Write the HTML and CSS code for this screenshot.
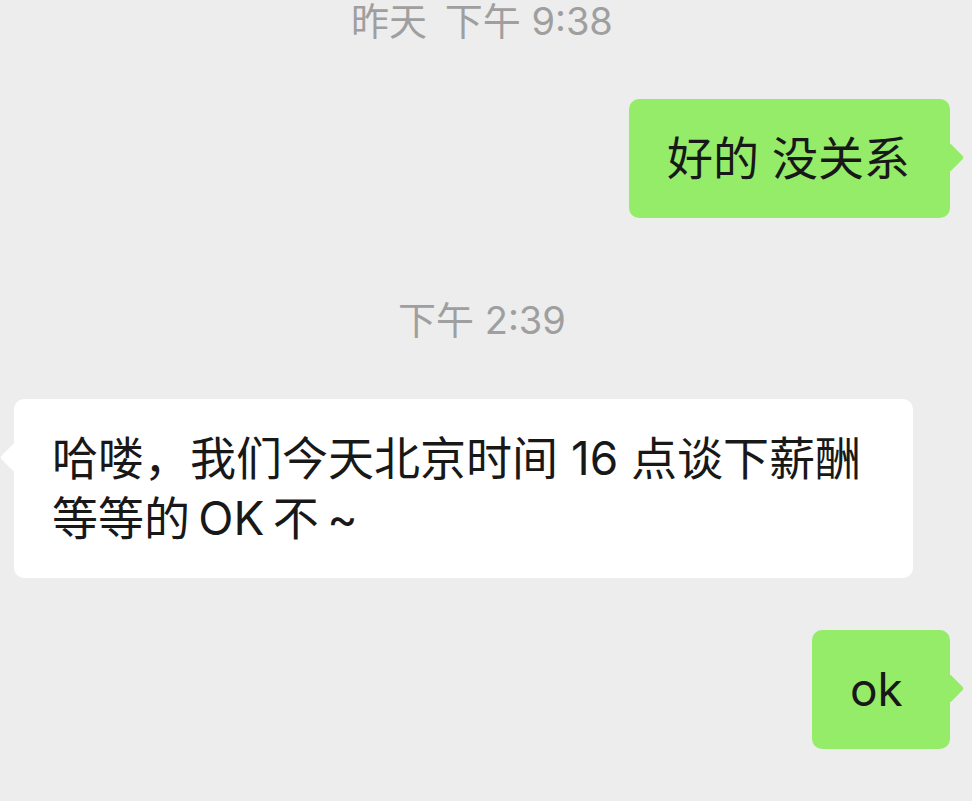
FILE: index.html
```html
<!DOCTYPE html>
<html lang="zh-CN">

<head>
    <meta charset="UTF-8">
    <meta name="viewport" content="width=device-width, initial-scale=1.0">
    <title>聊天</title>
    <link rel="stylesheet" href="styles.css">
</head>

<body>
    <div class="chat">
        <!-- yesterday -->
        <div class="time">昨天&thinsp; 下午 9:38</div>

        <div class="row row-me gap-first">
            <div class="bubble bubble-me">好的 没关系</div>
        </div>

        <!-- today -->
        <div class="time gap-time">下午 2:39</div>

        <div class="row row-other gap-after-time">
            <div class="bubble bubble-other">哈喽，我们今天北京时间 16 点谈下薪酬等等的&thinsp;OK&thinsp;不&thinsp;~</div>
        </div>

        <div class="row row-me gap-last">
            <div class="bubble bubble-me">ok</div>
        </div>
    </div>
</body>

</html>
```

FILE: styles.css
```css
body {
    margin: 0;
    background-color: #ededed;
    font-family: Inter, "Noto Sans CJK SC", sans-serif;
    color: #181818;
    height: 801px;
    overflow: hidden;
}

.chat {
    display: flex;
    flex-direction: column;
    padding: 0 22px 0 14px;
}

/* timestamps */
.time {
    text-align: center;
    font-size: 38px;
    line-height: 42px;
    color: #9f9f9f;
}

.gap-time {
    margin-top: 81px;
}

/* message rows */
.row {
    display: flex;
}

.row-me {
    justify-content: flex-end;
}

.row-other {
    justify-content: flex-start;
}

.gap-first {
    margin-top: 57px;
}

.gap-after-time {
    margin-top: 58px;
}

.gap-last {
    margin-top: 52px;
}

/* bubbles */
.bubble {
    position: relative;
    box-sizing: border-box;
    max-width: 899px;
    min-width: 138px;
    padding: 29px 40px 30px 38px;
    font-size: 46px;
    line-height: 60px;
    border-radius: 10px;
}

.bubble::after {
    content: "";
    position: absolute;
    top: 48px;
    width: 21px;
    height: 21px;
    border-radius: 3px;
    transform: rotate(45deg);
}

.bubble-me {
    background-color: #95ec69;
}

.bubble-me::after {
    right: -10px;
    background-color: #95ec69;
}

.bubble-other {
    background-color: #ffffff;
}

.bubble-other::after {
    left: -10px;
    background-color: #ffffff;
}
```
